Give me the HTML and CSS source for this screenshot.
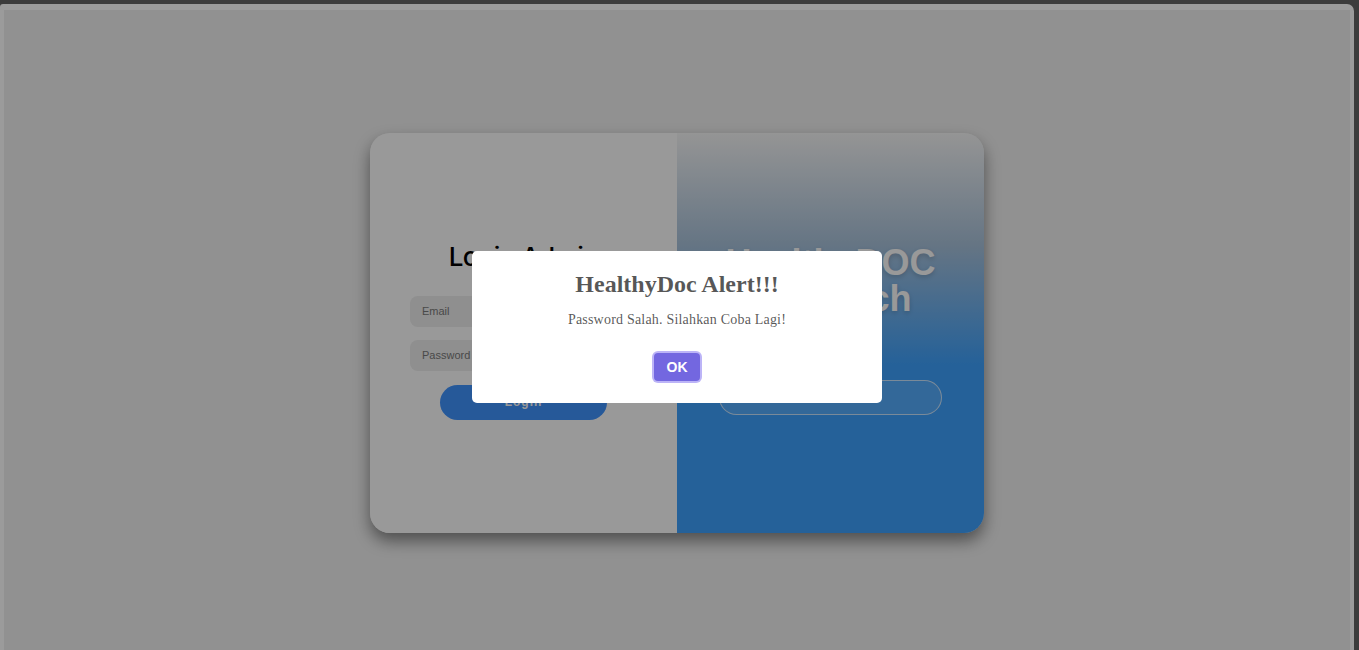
FILE: index.html
```html
<!DOCTYPE html>
<html lang="id">
<head>
<meta charset="utf-8">
<title>Login Admin - HealthyDOC</title>
<link rel="stylesheet" href="styles.css">
</head>
<body>
<div class="window">
  <div class="page">
    <div class="card">
      <section class="login-panel">
        <h2 class="login-title">Login Admin</h2>
        <input class="field" type="email" placeholder="Email">
        <input class="field" type="password" placeholder="Password">
        <button class="login-btn" type="button">Login</button>
      </section>
      <section class="brand-panel">
        <h1 class="brand-title">HealthyDOC<br>Research</h1>
        <button class="outline-btn" type="button">Beranda</button>
      </section>
    </div>
    <div class="overlay">
      <div class="modal">
        <div class="modal-title">HealthyDoc Alert!!!</div>
        <div class="modal-text">Password Salah. Silahkan Coba Lagi!</div>
        <div class="modal-footer">
          <button class="ok-btn" type="button">OK</button>
        </div>
      </div>
    </div>
  </div>
</div>
</body>
</html>
```

FILE: styles.css
```css
html, body {
  margin: 0;
  padding: 0;
  height: 100%;
  overflow: hidden;
}

body {
  background: #3c3c3c;
  font-family: "Liberation Serif", "Times New Roman", serif;
}

.window {
  margin: 4px 5px 0 0;
  height: 660px;
  background: #9b9b9b;
  border-radius: 3px 7px 7px 3px;
  padding: 6px 4px 0 4px;
  box-sizing: border-box;
}

.page {
  position: relative;
  height: 100%;
  background: #f2f2f2;
  display: flex;
  justify-content: center;
  align-items: flex-start;
  padding-top: 123px;
  box-sizing: border-box;
}

.card {
  width: 614px;
  height: 400px;
  border-radius: 20px;
  overflow: hidden;
  display: grid;
  grid-template-columns: 307px 307px;
  box-shadow: 0 8px 16px rgba(0, 0, 0, 0.45);
}

.login-panel {
  background: #ffffff;
  display: flex;
  flex-direction: column;
  align-items: center;
  justify-content: center;
  padding: 0 40px 6px;
}

.login-title {
  margin: 0 0 23px;
  font-family: "Inter", "Noto Sans", sans-serif;
  font-weight: 500;
  font-size: 26px;
  line-height: 32px;
  letter-spacing: -0.5px;
  color: #000;
}

.field {
  width: 100%;
  height: 31px;
  box-sizing: border-box;
  border: none;
  outline: none;
  border-radius: 8px;
  background: #eeeeee;
  padding: 0 12px;
  margin: 0 0 13px;
  font-family: "Liberation Sans", Arial, sans-serif;
  font-size: 11px;
  color: #333;
}

.field::placeholder {
  color: #7a7a7a;
}

.login-btn {
  margin-top: 1px;
  width: 167px;
  height: 35px;
  border: none;
  border-radius: 18px;
  background: #4094ff;
  color: #fff;
  font-family: "Liberation Sans", Arial, sans-serif;
  font-weight: bold;
  font-size: 12px;
  letter-spacing: 1px;
}

.brand-panel {
  background: linear-gradient(to bottom, #f8f8f8 0%, #a9c3dc 28%, #3ea2ff 58%, #3ea2ff 100%);
  display: flex;
  flex-direction: column;
  align-items: center;
  justify-content: center;
  padding-bottom: 7px;
}

.brand-title {
  margin: 0 0 63px;
  font-family: "Liberation Sans", Arial, sans-serif;
  font-weight: bold;
  font-size: 36px;
  line-height: 36px;
  text-align: center;
  color: #ffffff;
  text-shadow: 0 2px 5px rgba(0, 0, 0, 0.18);
}

.outline-btn {
  width: 223px;
  height: 35px;
  border: 1px solid rgba(255, 255, 255, 0.7);
  border-radius: 18px;
  background: rgba(255, 255, 255, 0.12);
  color: #fff;
  font-family: "Liberation Sans", Arial, sans-serif;
  font-weight: bold;
  font-size: 12px;
}

.overlay {
  position: absolute;
  inset: 0;
  background: rgba(0, 0, 0, 0.4);
  display: flex;
  justify-content: center;
  align-items: flex-start;
  padding-top: 241px;
  box-sizing: border-box;
}

.modal {
  width: 410px;
  height: 152px;
  box-sizing: border-box;
  background: #fff;
  border-radius: 5px;
  padding-top: 18px;
  text-align: center;
}

.modal-title {
  font-family: "Liberation Serif", "Times New Roman", serif;
  font-weight: bold;
  font-size: 24px;
  line-height: 30px;
  color: rgba(0, 0, 0, 0.67);
}

.modal-text {
  margin-top: 11px;
  font-family: "Liberation Serif", "Times New Roman", serif;
  font-size: 14px;
  line-height: 20px;
  letter-spacing: 0.2px;
  color: rgba(0, 0, 0, 0.67);
}

.modal-footer {
  margin-top: 23px;
  display: flex;
  justify-content: center;
}

.ok-btn {
  width: 46px;
  height: 28px;
  border: none;
  border-radius: 4px;
  background: #7367e0;
  color: #fff;
  font-family: "Liberation Sans", Arial, sans-serif;
  font-weight: bold;
  font-size: 14px;
  box-shadow: 0 0 0 2px #bcb4f7;
}
```
